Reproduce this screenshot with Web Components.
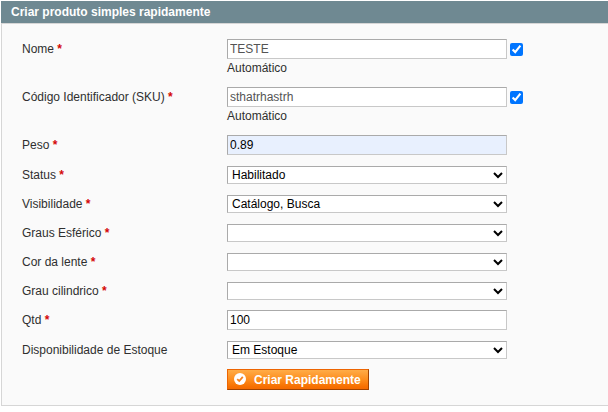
<!DOCTYPE html>
<html lang="pt-BR"><head><meta charset="utf-8"><title>Criar produto</title>
<style>
html,body{margin:0;background:#fff}
body{font:12px/16px "Liberation Sans",Arial,sans-serif;color:#2f2f2f;padding:1px 0 0 1px;height:412px;box-sizing:border-box;overflow:hidden}
</style></head><body>
<quick-panel heading="Criar produto simples rapidamente">
<form-row label="Nome" required style="height:48px"><text-field value="TESTE" auto></text-field></form-row>
<form-row label="Código Identificador (SKU)" required style="height:48px"><text-field value="sthatrhastrh" auto></text-field></form-row>
<form-row label="Peso" required style="height:31px"><text-field value="0.89" filled></text-field></form-row>
<form-row compact label="Status" required><select-field value="Habilitado"></select-field></form-row>
<form-row compact label="Visibilidade" required><select-field value="Catálogo, Busca"></select-field></form-row>
<form-row compact label="Graus Esférico" required><select-field></select-field></form-row>
<form-row compact label="Cor da lente" required><select-field></select-field></form-row>
<form-row compact label="Grau cilindrico" required style="height:28px"><select-field></select-field></form-row>
<form-row label="Qtd" required style="height:31px"><text-field value="100"></text-field></form-row>
<form-row compact label="Disponibilidade de Estoque" style="height:28px"><select-field value="Em Estoque"></select-field></form-row>
<form-row style="height:21px"><action-button>Criar Rapidamente</action-button></form-row>
</quick-panel>
<script>
class Base extends HTMLElement{
  connectedCallback(){ if(!this.shadowRoot) this.attachShadow({mode:'open'}).innerHTML=this.render(); }
  val(n){ return this.getAttribute(n)||''; }
}
customElements.define('quick-panel',class extends Base{
  render(){return `<style>
  :host{display:block}
  header{height:22px;box-sizing:border-box;background:#6f8992;color:#fff;font-weight:bold;padding:3px 10px}
  section{height:383px;box-sizing:border-box;border:1px solid #d6d6d6;border-right:0;background:#fafafa;padding:15px 0 0 20px}
  </style><header>${this.val('heading')}</header><section><slot></slot></section>`}
});
customElements.define('form-row',class extends Base{
  render(){return `<style>
  :host{display:grid;grid-template-columns:205px 1fr;height:29px;align-items:start}
  label{padding-top:2px;white-space:nowrap}
  :host([compact]) label{padding-top:1px}
  b{color:#d40707}
  </style><label>${this.val('label')}${this.hasAttribute('required')?' <b>*</b>':''}</label><div><slot></slot></div>`}
});
customElements.define('text-field',class extends Base{
  render(){const a=this.hasAttribute('auto');return `<style>
  :host{display:block}
  .line{display:flex;align-items:center;gap:3px}
  .box{width:280px;height:20px;box-sizing:border-box;border:1px solid;border-color:#aaa #c8c8c8 #c8c8c8 #aaa;padding:0 2px;margin:0;background:${this.hasAttribute('filled')?'#e8f0fe':'#fff'};color:${a?'#545454':'#000'};font:12px "Liberation Sans",Arial,sans-serif;outline:0;border-radius:0}
  .check{margin:0;width:13px;height:13px;position:relative;top:.5px}
  .note{padding-top:1px}
  </style><div class="line"><input class="box" value="${this.val('value')}">${a?'<input class="check" type="checkbox" checked>':''}</div>${a?'<div class="note">Automático</div>':''}`}
});
customElements.define('select-field',class extends Base{
  render(){return `<style>
  :host{display:block;height:18px}
  select{display:block;width:280px;height:18px;box-sizing:border-box;border:1px solid;border-color:#aaa #c8c8c8 #c8c8c8 #aaa;border-radius:0;background:#fff;color:#000;padding:0;margin:0;font:12px "Liberation Sans",Arial,sans-serif}
  </style><select><option>${this.val('value')}</option></select>`}
});
customElements.define('action-button',class extends Base{
  render(){return `<style>
  :host{display:block}
  button{display:flex;align-items:center;width:142px;height:21px;box-sizing:border-box;padding:0 7px 0 6px;margin:0;border:1px solid;border-color:#ed6502 #a04300 #a04300 #ed6502;background:linear-gradient(#ffac47,#fd8d1d 50%,#f77203 85%,#f56a00);color:#fff;font:bold 12px/16px "Liberation Sans",Arial,sans-serif;white-space:nowrap}
  svg{display:block;margin-right:8px;flex:none;position:relative;top:-.5px}
  </style><button><svg width="12" height="12" viewBox="0 0 12 12"><circle cx="6" cy="6" r="6" fill="#fff"/><path d="M3.2 6.2 5.2 8 8.8 3.8" fill="none" stroke="#f58220" stroke-width="1.8"/></svg><slot></slot></button>`}
});
</script></body></html>
